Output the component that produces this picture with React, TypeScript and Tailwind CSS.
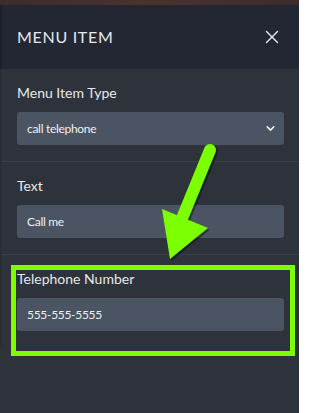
import { ChevronDown, X } from "lucide-react";

const font = { fontFamily: "Lato, 'Noto Sans', sans-serif" };

export default function App() {
  return (
    <div className="relative w-[299px] h-[413px] overflow-hidden bg-[#2e333b]" style={font}>
      <div className="h-[5px] bg-gradient-to-r from-[#3d2c2a] via-[#4a332d] to-[#3d2c2a]" />
      <div className="flex h-[64px] items-center justify-between bg-[#222733] pl-[15px] pr-[16px] border-l-2 border-[#1c2029]">
        <h1 className="text-[16px] tracking-[0.7px] text-[#e6e8ec]">MENU ITEM</h1>
        <X className="h-[22px] w-[22px] text-[#e6e8ec]" strokeWidth={1.6} />
      </div>

      <div className="border-l-2 border-[#2a2f36]">
        <div className="px-[15px] pt-[14px] pb-[16px] border-b border-[#3b414a]">
          <label className="block text-[14px] leading-[20px] text-[#e6e8ec]">Menu Item Type</label>
          <div className="mt-[9px] flex h-[33px] items-center justify-between rounded-[3px] bg-[#4b5462] pl-[10px] pr-[7px]">
            <span className="text-[12px] tracking-[-0.3px] text-[#eef0f2]">call telephone</span>
            <ChevronDown className="h-[13px] w-[13px] text-[#eef0f2]" strokeWidth={2.8} />
          </div>
        </div>

        <div className="px-[15px] pt-[14px] pb-[16px] border-b border-[#3b414a]">
          <label className="block text-[14px] leading-[20px] text-[#e6e8ec]">Text</label>
          <div className="mt-[9px] flex h-[33px] items-center rounded-[3px] bg-[#4b5462] pl-[10px]">
            <span className="text-[12px] tracking-[-0.3px] text-[#eef0f2]">Call me</span>
          </div>
        </div>

        <div className="px-[15px] pt-[14px] pb-[16px]">
          <label className="block text-[14px] leading-[20px] text-[#e6e8ec]">Telephone Number</label>
          <div className="mt-[9px] flex h-[33px] items-center rounded-[3px] bg-[#4b5462] pl-[10px]">
            <span className="text-[12px] tracking-[-0.3px] text-[#eef0f2]">555-555-5555</span>
          </div>
        </div>
      </div>

      {/* annotation overlay */}
      <div className="absolute left-[11px] top-[265px] h-[91px] w-[284px] border-[5px] border-[#7cff00]" />
      <svg className="absolute left-0 top-0" width="299" height="413" viewBox="0 0 299 413">
        <g opacity="0.35" transform="translate(1.5,2)">
          <line x1="210" y1="150" x2="183" y2="215" stroke="#000" strokeWidth="13" strokeLinecap="round" />
          <polygon points="162,209 208,228 170,259" fill="#000" />
        </g>
        <line x1="210" y1="150" x2="183" y2="216" stroke="#7cff00" strokeWidth="12" strokeLinecap="round" />
        <polygon points="162,209 208,228 170,259" fill="#7cff00" />
      </svg>
    </div>
  );
}
